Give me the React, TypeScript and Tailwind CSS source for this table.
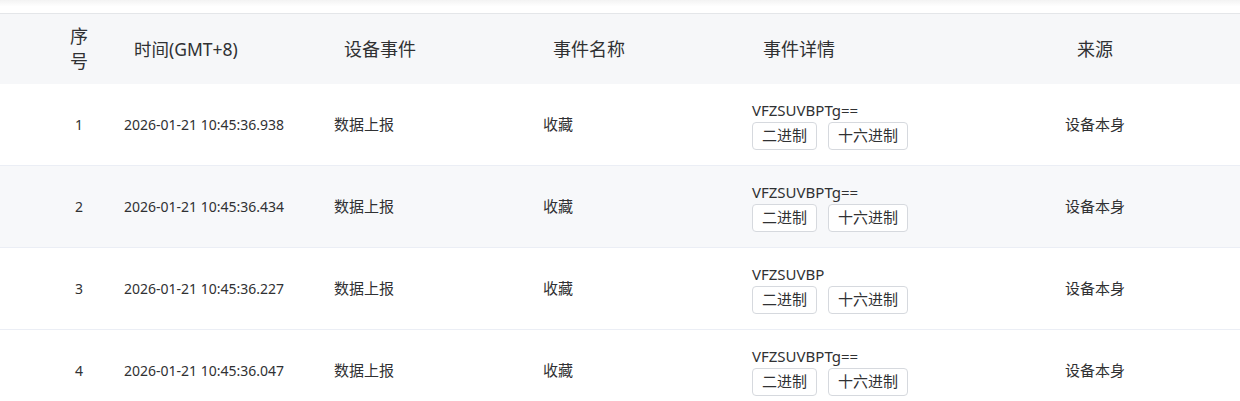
const rows = [
  { id: 1, time: "2026-01-21 10:45:36.938", detail: "VFZSUVBPTg==" },
  { id: 2, time: "2026-01-21 10:45:36.434", detail: "VFZSUVBPTg==" },
  { id: 3, time: "2026-01-21 10:45:36.227", detail: "VFZSUVBP" },
  { id: 4, time: "2026-01-21 10:45:36.047", detail: "VFZSUVBPTg==" },
]

const font = { fontFamily: '"Noto Sans", "Noto Sans CJK SC", sans-serif' }

export default function App() {
  return (
    <div className="w-[1240px] bg-white text-[#303133]" style={font}>
      {/* top strip */}
      <div className="h-[14px] border-b border-[#e4e6e9] bg-gradient-to-b from-[#f3f3f3] via-white to-white" />

      <div className="grid grid-cols-[114px_210px_209px_209px_208px_290px] h-[70px] bg-[#f6f7f9] text-[18px] items-center">
        <div className="flex justify-center pl-[44px]">
          <span className="w-[18px] leading-[25px] text-center">序号</span>
        </div>
        <div className="pl-[20px] text-[17.5px]">时间(GMT+8)</div>
        <div className="pl-[20px]">设备事件</div>
        <div className="pl-[20px]">事件名称</div>
        <div className="pl-[21px]">事件详情</div>
        <div className="text-center">来源</div>
      </div>

      {rows.map((r, i) => (
        <div
          key={r.id}
          className={`grid grid-cols-[114px_210px_209px_209px_208px_290px] h-[82px] items-center border-b border-[#ebeef5] text-[15px] ${
            i === 1 ? "bg-[#f7f8fa]" : "bg-white"
          }`}
        >
          <div className="pl-[44px] text-center text-[14px]">{r.id}</div>
          <div className="pl-[10px] text-[14px]">{r.time}</div>
          <div className="pl-[10px]">数据上报</div>
          <div className="pl-[10px]">收藏</div>
          <div className="pl-[10px]">
            <div className="leading-[20px]">{r.detail}</div>
            <div className="flex gap-[11px] mt-[2px]">
              <button className="h-[28px] px-[9px] border border-[#d6d9de] rounded-[4px] bg-white">二进制</button>
              <button className="h-[28px] px-[9px] border border-[#d6d9de] rounded-[4px] bg-white">十六进制</button>
            </div>
          </div>
          <div className="text-center">设备本身</div>
        </div>
      ))}
    </div>
  )
}
